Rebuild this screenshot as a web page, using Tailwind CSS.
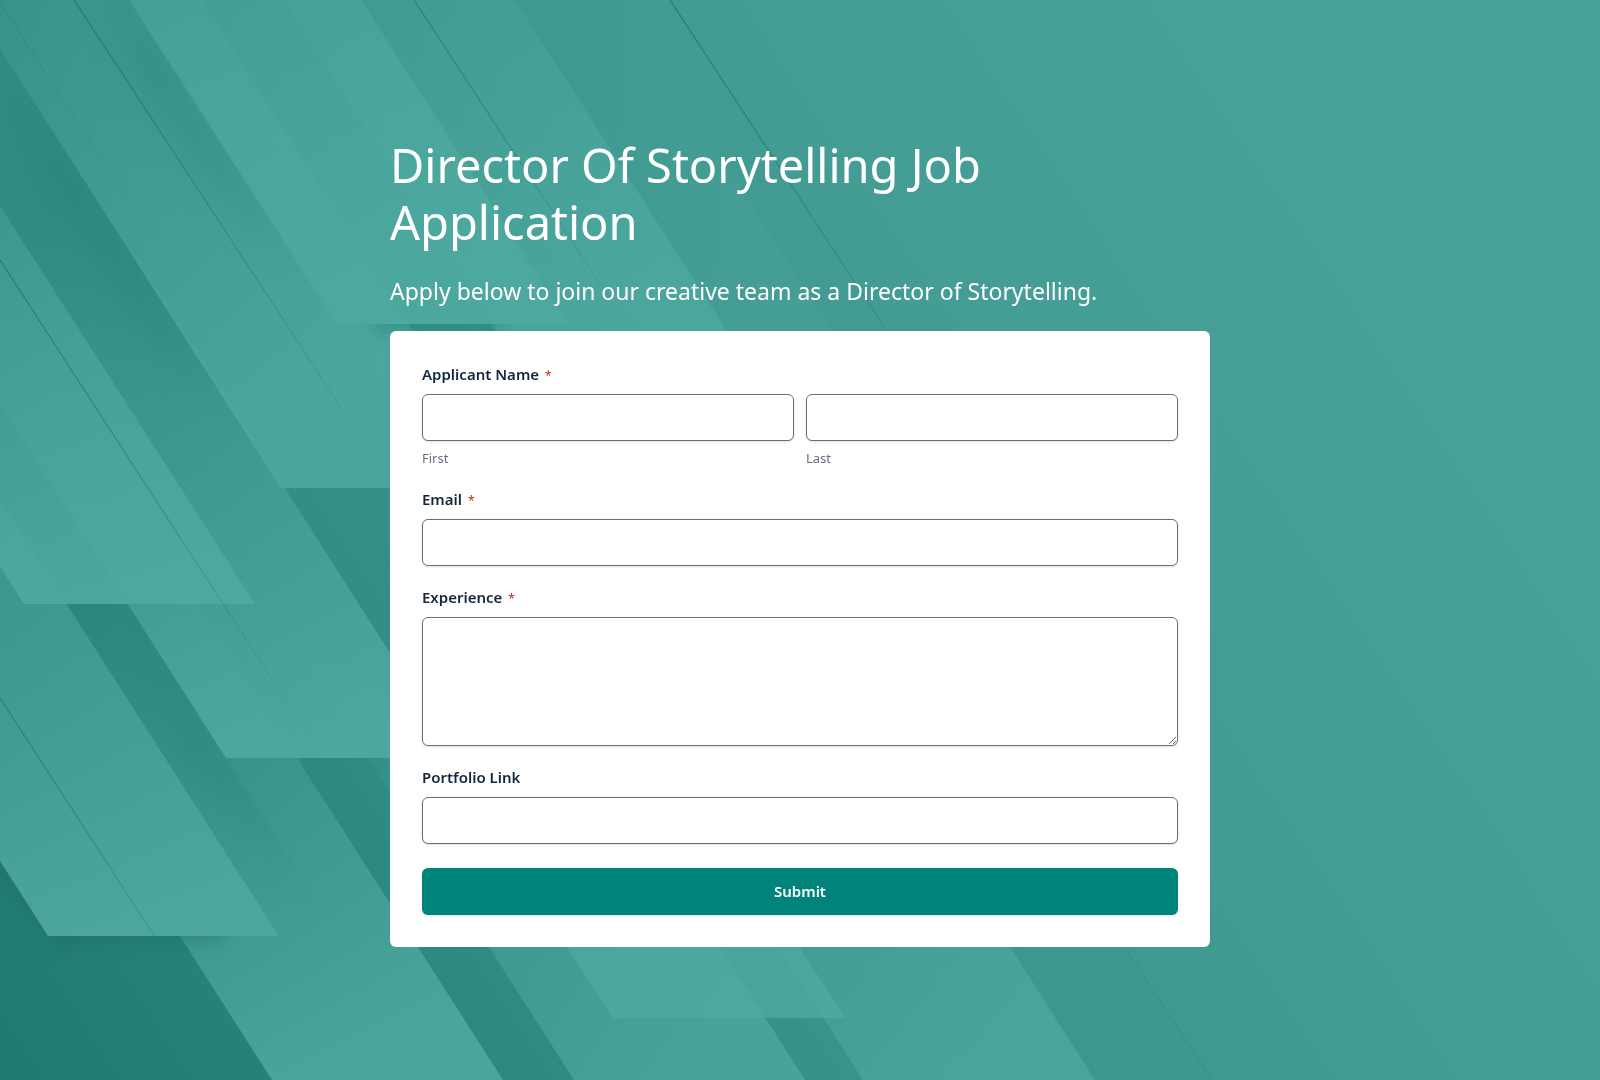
<!DOCTYPE html>
<html lang="en">
<head>
    <meta charset="UTF-8">
    <title>Director Of Storytelling Job Application</title>
    <script src="https://cdn.jsdelivr.net/npm/@tailwindcss/browser@4"></script>
    <meta name="viewport" content="width=device-width, initial-scale=1.0">
    <style>
        body {
            font-family: 'Noto Sans', sans-serif;
        }
    </style>
</head>
<body class="bg-[#429b93] text-[#14283c]">

<!-- Background artwork -->
<svg class="fixed inset-0 -z-10 w-full h-full" viewBox="0 0 1600 1080" preserveAspectRatio="xMinYMin slice" aria-hidden="true">
    <defs>
        <linearGradient id="base" gradientUnits="userSpaceOnUse" x1="1600" y1="0" x2="23" y2="1045">
            <stop offset="0" stop-color="#49a39b"/>
            <stop offset="0.17" stop-color="#48a29a"/>
            <stop offset="0.38" stop-color="#439d95"/>
            <stop offset="0.48" stop-color="#3f9991"/>
            <stop offset="0.64" stop-color="#39938b"/>
            <stop offset="0.76" stop-color="#308b83"/>
            <stop offset="1" stop-color="#227b73"/>
        </linearGradient>
        <!-- Band fills, each fading in towards its lower end -->
        <linearGradient id="fillA" gradientUnits="userSpaceOnUse" x1="0" y1="0" x2="220" y2="440">
            <stop offset="0" stop-color="#4fa9a1" stop-opacity="0.15"/>
            <stop offset="1" stop-color="#4fa9a1" stop-opacity="0.85"/>
        </linearGradient>
        <linearGradient id="fillB" gradientUnits="userSpaceOnUse" x1="100" y1="200" x2="260" y2="760">
            <stop offset="0" stop-color="#4fa9a1" stop-opacity="0"/>
            <stop offset="1" stop-color="#4fa9a1" stop-opacity="0.92"/>
        </linearGradient>
        <linearGradient id="fillC" gradientUnits="userSpaceOnUse" x1="0" y1="100" x2="120" y2="600">
            <stop offset="0" stop-color="#4fa9a1" stop-opacity="0.3"/>
            <stop offset="1" stop-color="#4fa9a1" stop-opacity="0.93"/>
        </linearGradient>
        <linearGradient id="fillD" gradientUnits="userSpaceOnUse" x1="0" y1="500" x2="130" y2="936">
            <stop offset="0" stop-color="#4fa9a1" stop-opacity="0.42"/>
            <stop offset="1" stop-color="#4fa9a1" stop-opacity="0.94"/>
        </linearGradient>
        <linearGradient id="fillE" gradientUnits="userSpaceOnUse" x1="180" y1="0" x2="290" y2="300">
            <stop offset="0" stop-color="#4da8a0" stop-opacity="0.5"/>
            <stop offset="1" stop-color="#4da8a0" stop-opacity="0.95"/>
        </linearGradient>
        <linearGradient id="fillF" gradientUnits="userSpaceOnUse" x1="360" y1="0" x2="500" y2="330">
            <stop offset="0" stop-color="#4da8a0" stop-opacity="0.25"/>
            <stop offset="1" stop-color="#4da8a0" stop-opacity="0.8"/>
        </linearGradient>
        <linearGradient id="fillK" gradientUnits="userSpaceOnUse" x1="110" y1="600" x2="300" y2="1080">
            <stop offset="0" stop-color="#4fa9a1" stop-opacity="0.04"/>
            <stop offset="1" stop-color="#4fa9a1" stop-opacity="0.88"/>
        </linearGradient>
        <linearGradient id="fillL" gradientUnits="userSpaceOnUse" x1="380" y1="740" x2="660" y2="1080">
            <stop offset="0" stop-color="#4fa9a1" stop-opacity="0.15"/>
            <stop offset="1" stop-color="#4fa9a1" stop-opacity="0.75"/>
        </linearGradient>
        <linearGradient id="fillM" gradientUnits="userSpaceOnUse" x1="800" y1="880" x2="960" y2="1080">
            <stop offset="0" stop-color="#4fa9a1" stop-opacity="0.35"/>
            <stop offset="1" stop-color="#4fa9a1" stop-opacity="0.75"/>
        </linearGradient>
        <linearGradient id="fillP" gradientUnits="userSpaceOnUse" x1="500" y1="60" x2="640" y2="330">
            <stop offset="0" stop-color="#4fa9a1" stop-opacity="0"/>
            <stop offset="1" stop-color="#4fa9a1" stop-opacity="0.25"/>
        </linearGradient>
        <linearGradient id="line" x1="0" y1="0" x2="0" y2="1">
            <stop offset="0" stop-color="#1f7a72"/>
            <stop offset="1" stop-color="#1f7a72" stop-opacity="0"/>
        </linearGradient>
        <filter id="blur" x="-50%" y="-50%" width="200%" height="200%" color-interpolation-filters="sRGB">
            <feGaussianBlur stdDeviation="18"/>
        </filter>
        <filter id="blurSmall" x="-20%" y="-200%" width="140%" height="500%" color-interpolation-filters="sRGB">
            <feGaussianBlur stdDeviation="8"/>
        </filter>
        <clipPath id="leftA"><path d="M-57-40L281 488H-200V-40z"/></clipPath>
        <clipPath id="leftB"><path d="M-42 340L460 1124H-40V340z"/></clipPath>
        <clipPath id="leftE"><path d="M104-40L400 422H-100V-40z"/></clipPath>
        <clipPath id="belowE"><path d="M337 324H568V360H337z"/></clipPath>
    </defs>

    <path fill="url(#base)" d="M0 0H1600V1080H0z"/>

    <path fill="url(#fillP)" d="M389 0H620L1089 732H858z"/>
    <path fill="url(#fillF)" d="M284 0H515L890 586H659z"/>
    <path fill="url(#fillM)" d="M734 878H966L1095 1080H863z"/>
    <path fill="url(#fillL)" d="M310 668H542L805 1080H574z"/>
    <path fill="#4fa9a1" fill-opacity="0.75" d="M510 860H742L846 1018H613z"/>
    <path fill="url(#fillK)" d="M-39 594H192L503 1080H272z"/>

    <g clip-path="url(#leftB)">
        <path fill="#1f7a72" fill-opacity="0.4" filter="url(#blur)" d="M110 575L226 758L310 885L190 758z"/>
    </g>
    <path fill="url(#fillB)" d="M-130 200H101L457 758H226z"/>

    <g clip-path="url(#leftA)">
        <path fill="#1f7a72" fill-opacity="0.45" filter="url(#blur)" d="M-20 20L225 402L150 330L40 170z"/>
    </g>
    <path fill="url(#fillA)" d="M-31 0H201L513 488H281z"/>

    <path fill="#13665f" fill-opacity="0.35" filter="url(#blurSmall)" d="M-30 800H20L60 920H235L215 942H90L60 950L-10 870z"/>
    <path fill="url(#base)" d="M-231 500H0L279 936H48z"/>
    <path fill="url(#fillD)" d="M-231 500H0L279 936H48z"/>
    <path fill="url(#fillC)" d="M-299 100H-68L255 604H24z"/>

    <g clip-path="url(#leftE)">
        <path fill="#1f7a72" fill-opacity="0.4" filter="url(#blur)" d="M100-40L290 253L205 170L140 80z"/>
    </g>
    <g clip-path="url(#belowE)">
        <path fill="#1f7a72" fill-opacity="0.6" filter="url(#blurSmall)" d="M375 318H500V330H375z"/>
    </g>
    <path fill="url(#fillE)" d="M129 0H361L568 324H337z"/>

    <!-- Hairlines -->
    <g fill="none" stroke="url(#line)" stroke-width="1.2">
        <path d="M74 0L391 484"/>
        <path d="M0 260L323 758"/>
        <path stroke-opacity="0.85" d="M0 698L240 1068"/>
        <path stroke-opacity="0.8" d="M414 0L640 345"/>
        <path d="M670 0L1000 504"/>
        <path stroke-opacity="0.3" d="M0 3L200 310"/>
        <path stroke="#1f7a72" stroke-opacity="0.2" d="M1124 946L1212 1080"/>
    </g>
</svg>

<main class="min-h-screen flex items-center justify-center pt-[3px]">
    <div class="w-full max-w-[820px]">

        <!-- Header -->
        <header class="text-white mb-[25px]">
            <h1 class="text-[47px] leading-[57px]">Director Of Storytelling Job Application</h1>
            <p class="mt-[26px] text-[23px] leading-[29px]">Apply below to join our creative team as a Director of Storytelling.</p>
        </header>

        <!-- Application form -->
        <form class="bg-white rounded-md p-8 flex flex-col gap-5" onsubmit="event.preventDefault()">
            <fieldset>
                <legend class="mb-2 text-[15px] leading-[23px] font-semibold">Applicant Name <span class="ml-0.5 text-[12px] leading-none font-normal text-[#c02b0a]">*</span></legend>
                <div class="grid grid-cols-2 gap-3">
                    <div class="flex flex-col gap-2">
                        <input type="text" id="firstName" required class="w-full h-[47px] px-3 bg-white border border-[#686e80] rounded-md shadow-sm">
                        <label for="firstName" class="text-[13px] leading-[19px] text-[#686e80]">First</label>
                    </div>
                    <div class="flex flex-col gap-2">
                        <input type="text" id="lastName" required class="w-full h-[47px] px-3 bg-white border border-[#686e80] rounded-md shadow-sm">
                        <label for="lastName" class="text-[13px] leading-[19px] text-[#686e80]">Last</label>
                    </div>
                </div>
            </fieldset>

            <div class="flex flex-col gap-2">
                <label for="email" class="text-[15px] leading-[23px] font-semibold">Email <span class="ml-0.5 text-[12px] leading-none font-normal text-[#c02b0a]">*</span></label>
                <input type="email" id="email" required class="w-full h-[47px] px-3 bg-white border border-[#686e80] rounded-md shadow-sm">
            </div>

            <div class="flex flex-col gap-2">
                <label for="experience" class="text-[15px] leading-[23px] font-semibold">Experience <span class="ml-0.5 text-[12px] leading-none font-normal text-[#c02b0a]">*</span></label>
                <textarea id="experience" required class="w-full h-[129px] px-3 py-2 bg-white border border-[#686e80] rounded-md shadow-sm resize"></textarea>
            </div>

            <div class="flex flex-col gap-2">
                <label for="portfolio" class="text-[15px] leading-[23px] font-semibold">Portfolio Link</label>
                <input type="url" id="portfolio" class="w-full h-[47px] px-3 bg-white border border-[#686e80] rounded-md shadow-sm">
            </div>

            <button type="submit" class="mt-1 h-[47px] w-full rounded-md bg-[#00837a] text-[15px] font-semibold text-white shadow-sm hover:bg-[#00746c] transition">Submit</button>
        </form>
    </div>
</main>

</body>
</html>
